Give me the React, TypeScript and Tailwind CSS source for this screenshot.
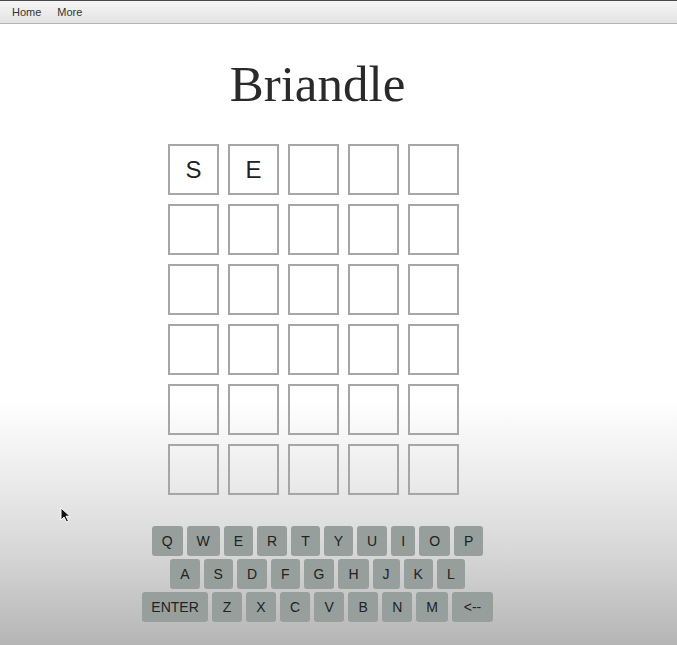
import React from "react";

const rows = [
  ["S", "E", "", "", ""],
  ["", "", "", "", ""],
  ["", "", "", "", ""],
  ["", "", "", "", ""],
  ["", "", "", "", ""],
  ["", "", "", "", ""],
];

const keyRows = [
  ["Q", "W", "E", "R", "T", "Y", "U", "I", "O", "P"],
  ["A", "S", "D", "F", "G", "H", "J", "K", "L"],
  ["ENTER", "Z", "X", "C", "V", "B", "N", "M", "<--"],
];

function keyWidth(k: string, row: number) {
  if (k === "ENTER") return "w-[66px]";
  if (k === "<--") return "w-[41px]";
  if (row === 2) return "min-w-[30px]";
  return "";
}

export default function App() {
  return (
    <div
      className="relative h-[645px] w-full overflow-hidden bg-[linear-gradient(to_bottom,#ffffff_0%,#ffffff_62%,#ececec_74%,#d6d6d6_86%,#b5b5b5_100%)]"
      style={{ fontFamily: '"Liberation Sans", Arial, sans-serif' }}
    >
      <div className="flex h-[24px] items-center gap-[16px] border-t border-b border-t-[#4a4a4a] border-b-[#b4b4b4] bg-[linear-gradient(to_bottom,#f6f6f6,#e3e3e3)] pl-[12px] text-[11px] text-[#333]">
        <span>Home</span>
        <span>More</span>
      </div>
      <div className="flex w-[635px] flex-col items-center">
        <h1
          className="mt-[35px] text-[51px] leading-none text-[#2a2a2a]"
          style={{ fontFamily: '"Liberation Serif", "Times New Roman", serif' }}
        >
          Briandle
        </h1>
        <div className="mt-[34px] mr-[8px] flex flex-col gap-[9px]">
          {rows.map((r, i) => (
            <div key={i} className="flex gap-[9px]">
              {r.map((c, j) => (
                <div
                  key={j}
                  className="flex h-[51px] w-[51px] items-center justify-center border-2 border-[#a6a6a6] text-[24px] text-[#222]"
                >
                  {c}
                </div>
              ))}
            </div>
          ))}
        </div>
        <div className="mt-[31px] flex flex-col items-center gap-[3px]">
          {keyRows.map((r, i) => (
            <div key={i} className="flex gap-[4px]">
              {r.map((k) => (
                <div
                  key={k}
                  className={`flex h-[30px] items-center justify-center rounded-[3px] bg-[#969f9c] px-[10px] text-[14px] text-[#222] ${keyWidth(k, i)}`}
                >
                  {k}
                </div>
              ))}
            </div>
          ))}
        </div>
      </div>
      <svg
        className="absolute left-[60px] top-[507px]"
        width="12"
        height="17"
        viewBox="0 0 12 17"
      >
        <path
          d="M1 1 L1 13 L4 10 L6.5 15 L8.5 14 L6 9.2 L10 9.2 Z"
          fill="#111"
          stroke="#fff"
          strokeWidth="1"
          strokeLinejoin="round"
        />
      </svg>
    </div>
  );
}
